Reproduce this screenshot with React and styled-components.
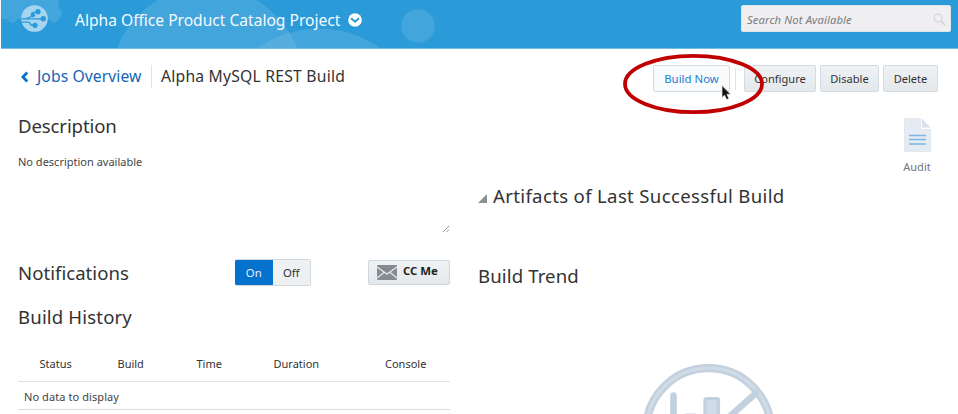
import React from "react";
import styled, { createGlobalStyle, css } from "styled-components";

const Global = createGlobalStyle`
  * { box-sizing: border-box; }
  html, body { margin: 0; height: 414px; overflow: hidden; background: #fff; }
  body { font-family: "Noto Sans", "Open Sans", sans-serif; color: #333; }
  button { font-family: inherit; padding: 0; margin: 0; }
`;

const Page = styled.main`
  position: relative;
  width: 958px;
  height: 414px;
  overflow: hidden;
`;

const Header = styled.header`
  position: relative;
  display: flex;
  height: 49px;
  margin-left: 1px;
  padding: 5px 7px 0 20px;
  background: #2b9ad8;
  border-bottom: 1px solid #74bde7;
`;

const HeaderArt = styled.svg`
  position: absolute;
  inset: 0;
`;

const Logo = styled.svg`
  position: relative;
  flex: none;
  width: 27px;
  height: 27px;
`;

const ProjectTitle = styled.div`
  position: relative;
  display: flex;
  align-items: center;
  gap: 8px;
  height: 29px;
  margin-left: 27px;
  color: #f4faff;
  font-size: 15.6px;
  white-space: nowrap;
`;

const TitleText = styled.span`
  width: 265px;
  letter-spacing: -0.01px;
`;

const Search = styled.div`
  position: relative;
  display: flex;
  align-items: center;
  justify-content: space-between;
  width: 210px;
  height: 27px;
  margin-left: auto;
  padding: 1px 4px 0 5px;
  background: #efeff1;
  border: 1px solid #dbe6ee;
  border-radius: 2px;
  color: #777b80;
  font-size: 11.2px;
  font-style: italic;
  letter-spacing: 0.14px;
`;

const Toolbar = styled.div`
  display: flex;
  align-items: flex-start;
  height: 54px;
  padding: 16px 20px 0 20px;
`;

const Crumbs = styled.nav`
  display: flex;
  align-items: center;
  height: 23px;
  font-size: 15.7px;
  line-height: 23px;
  white-space: nowrap;
`;

const BackLink = styled.a`
  display: flex;
  align-items: center;
  gap: 8px;
  width: 131px;
  color: #1466b3;
  letter-spacing: 0.08px;
`;

const CrumbCurrent = styled.span`
  padding-left: 9px;
  border-left: 1px solid #dfe4ea;
  color: #333;
  letter-spacing: 0.22px;
`;

const Actions = styled.div`
  display: flex;
  align-items: center;
  gap: 4px;
  margin-left: auto;
`;

const Button = styled.button`
  width: ${(p) => p.$width}px;
  height: 27px;
  border: 1px solid #d3dbe2;
  border-radius: 2px;
  background: linear-gradient(#f0f2f4, #e4e8eb);
  color: #333;
  font-size: 11.1px;
  line-height: 25px;
  ${(p) =>
    p.$hover &&
    css`
      background: #f8fafb;
      color: #1c7fd0;
      font-size: 11.4px;
    `}
`;

const Divider = styled.span`
  width: 1px;
  height: 22px;
  margin: 0 4px 0 1px;
  background: #dde5ec;
`;

const Columns = styled.div`
  display: grid;
  grid-template-columns: 432px 460px;
  column-gap: 28px;
  padding-left: 18px;
`;

const Column = styled.section`
  display: flex;
  flex-direction: column;
`;

const Heading = styled.h2`
  margin: 0;
  height: 26px;
  color: #333;
  font-size: 18.6px;
  font-weight: 400;
  line-height: 26px;
  letter-spacing: ${(p) => p.$spacing || 0}px;
  white-space: nowrap;
`;

const DescriptionTitle = styled(Heading)`
  margin-top: 10px;
`;

const Description = styled.div`
  display: flex;
  justify-content: space-between;
  height: 83px;
  margin-top: 11px;
  padding-top: 4px;
  font-size: 11px;
  line-height: 16px;
  color: #444;
`;

const Grip = styled.svg`
  align-self: flex-end;
`;

const NotificationRow = styled.div`
  display: flex;
  align-items: center;
  height: 27px;
  margin-top: 26px;
`;

const NotificationTitle = styled(Heading)`
  width: 217px;
`;

const Switch = styled.div`
  display: flex;
  width: 76px;
  height: 27px;
  border: 1px solid #d0d7dd;
  border-left: 0;
  border-radius: 2px;
  overflow: hidden;
`;

const SwitchOption = styled.button`
  flex: 1;
  border: 0;
  font-size: 11.3px;
  background: ${(p) => (p.$on ? "#0572ce" : "#eef0f1")};
  color: ${(p) => (p.$on ? "#e1f0fc" : "#333")};
`;

const CcButton = styled.button`
  display: flex;
  align-items: center;
  gap: 6px;
  width: 82px;
  height: 25px;
  margin-left: auto;
  padding-left: 8px;
  border: 1px solid #ccd8e0;
  border-radius: 2px;
  background: linear-gradient(#f0f2f4, #e5e8ea);
  color: #222;
  font-size: 11.4px;
  font-weight: 700;
`;

const CcLabel = styled.span`
  margin-top: -4px;
`;

const HistoryTitle = styled(Heading)`
  margin-top: 18px;
`;

const HistoryTable = styled.div`
  margin-top: 17px;
  font-size: 11px;
  color: #333;
`;

const HeadRow = styled.div`
  display: grid;
  grid-template-columns: 78px 79px 77px 111.5px auto;
  height: 35px;
  padding-left: 21.5px;
  border-bottom: 1px solid #dfe2e6;
  line-height: 34px;
`;

const EmptyRow = styled.div`
  height: 28px;
  padding-left: 6px;
  border-bottom: 1px solid #d9dbe5;
  color: #444;
  line-height: 29px;
  letter-spacing: 0.08px;
`;

const Audit = styled.div`
  display: flex;
  flex-direction: column;
  align-items: center;
  align-self: flex-end;
  width: 42px;
  height: 80px;
  padding-top: 15px;
  font-size: 11px;
  line-height: 16px;
  color: #737679;
`;

const AuditIcon = styled.svg`
  flex: none;
  margin-bottom: 7px;
`;

const Artifacts = styled.div`
  display: flex;
  gap: 6px;
`;

const Triangle = styled.svg`
  margin-top: 11px;
`;

const TrendTitle = styled(Heading)`
  margin-top: 54px;
`;

const NoChart = styled.svg`
  flex: none;
  margin: 74px 0 0 164px;
`;

const Overlay = styled.svg`
  position: absolute;
  inset: 0;
  pointer-events: none;
`;

export default function App() {
  return (
    <Page>
      <Global />
      <Header>
        <HeaderArt width="957" height="48" viewBox="1 0 957 48">
          <g fill="#fff" fillOpacity="0.11">
            <path d="M1 19Q7 18 10 22Q15 25 18 18Q29 28 45 17L52 22Q56 24 60 18Q64 13 60 9Q57 5 59 0H1Z" />
            <circle cx="207" cy="83" r="96.6" />
            <circle cx="319" cy="133.5" r="105" />
            <circle cx="418" cy="26" r="16.8" />
          </g>
        </HeaderArt>
        <Logo viewBox="0 0 27 27">
          <circle cx="13.5" cy="13.5" r="13.3" fill="#a4d4f0" />
          <g fill="none" stroke="#2b9ad8" strokeWidth="1.3">
            <path d="M0 13.8H22M4 13.8Q8 13.5 12 10M10 9Q12 6.7 17 6.7M0 17.2H7Q9 17.2 10 20H14" />
          </g>
          <g fill="#2b9ad8">
            <circle cx="17" cy="6.7" r="2.6" />
            <circle cx="12" cy="10" r="2.3" />
            <circle cx="22.3" cy="13.8" r="2.7" />
            <circle cx="14" cy="20.3" r="2.6" />
          </g>
        </Logo>
        <ProjectTitle>
          <TitleText>Alpha Office Product Catalog Project</TitleText>
          <svg width="14" height="14" viewBox="0 0 14 14">
            <circle cx="7" cy="7" r="6.8" fill="#fff" />
            <path d="M3 5.2 7 8.7l4-3.5" fill="none" stroke="#2b9ad8" strokeWidth="2" />
          </svg>
        </ProjectTitle>
        <Search>
          Search Not Available
          <svg width="13" height="13" viewBox="0 0 13 13" fill="none" stroke="#d4d5d8">
            <circle cx="5" cy="5" r="3.8" strokeWidth="1.2" />
            <path d="m8 8 4 4" strokeWidth="1.8" />
          </svg>
        </Search>
      </Header>

      <Toolbar>
        <Crumbs>
          <BackLink>
            <svg width="9" height="12" viewBox="0 0 9 12">
              <path d="M7.2 1.5 2.9 6l4.3 4.5" fill="none" stroke="#0572ce" strokeWidth="2.7" />
            </svg>
            Jobs Overview
          </BackLink>
          <CrumbCurrent>Alpha MySQL REST Build</CrumbCurrent>
        </Crumbs>
        <Actions>
          <Button $width={77} $hover>Build Now</Button>
          <Divider />
          <Button $width={72}>Configure</Button>
          <Button $width={59}>Disable</Button>
          <Button $width={55}>Delete</Button>
        </Actions>
      </Toolbar>

      <Columns>
        <Column>
          <DescriptionTitle $spacing={-0.13}>Description</DescriptionTitle>
          <Description>
            No description available
            <Grip width="8" height="8" viewBox="0 0 8 8" stroke="#8d8d8d" strokeWidth="0.9">
              <path d="M1 7 7 1M4.5 7 7 4.5" />
            </Grip>
          </Description>
          <NotificationRow>
            <NotificationTitle $spacing={0.02}>Notifications</NotificationTitle>
            <Switch>
              <SwitchOption $on>On</SwitchOption>
              <SwitchOption>Off</SwitchOption>
            </Switch>
            <CcButton>
              <svg width="20" height="15" viewBox="0 0 20 15">
                <rect width="20" height="15" rx="1" fill="#858b90" />
                <path d="M0 2 10 9 20 2M0 13 7 7.5M20 13 13 7.5" fill="none" stroke="#e9ecee" strokeWidth="1.1" />
              </svg>
              <CcLabel>CC Me</CcLabel>
            </CcButton>
          </NotificationRow>
          <HistoryTitle $spacing={0.15}>Build History</HistoryTitle>
          <HistoryTable>
            <HeadRow>
              <span>Status</span>
              <span>Build</span>
              <span>Time</span>
              <span>Duration</span>
              <span>Console</span>
            </HeadRow>
            <EmptyRow>No data to display</EmptyRow>
          </HistoryTable>
        </Column>

        <Column>
          <Audit>
            <AuditIcon width="27" height="34" viewBox="0 0 27 34">
              <path d="M1 .5h15.5V11.5H26.5V33.5H.5V1Z" fill="#e5ebf2" stroke="#dce4ec" strokeWidth="0.8" />
              <path d="M18 .5V9.5H26.5Z" fill="#d9e2ea" />
              <path d="M5 17.5H22M5 21.5H22M5 26H22" stroke="#7bb6e0" strokeWidth="1.7" />
            </AuditIcon>
            Audit
          </Audit>
          <Artifacts>
            <Triangle width="9" height="9" viewBox="0 0 9 9">
              <path d="M0 9H9V0Z" fill="#8b9197" />
            </Triangle>
            <Heading $spacing={0.33}>Artifacts of Last Successful Build</Heading>
          </Artifacts>
          <TrendTitle $spacing={0.12}>Build Trend</TrendTitle>
          <NoChart width="134" height="51" viewBox="642 363 134 51">
            <circle cx="708.5" cy="430.6" r="62.4" fill="none" stroke="#c3d0dd" strokeWidth="8.2" />
            <circle cx="708.5" cy="430.6" r="62.4" fill="none" stroke="#cfdbe6" strokeWidth="3.2" />
            <path d="M673.5 395.5V420M756 393 728 418" fill="none" stroke="#c3d0dd" strokeWidth="6.6" strokeLinecap="round" />
            <rect x="705" y="398.5" width="13.5" height="30" rx="1.5" fill="#cfdbe6" stroke="#c3d0dd" strokeWidth="3.2" />
            <path d="M685 413.8h11" stroke="#d5dfe8" />
          </NoChart>
        </Column>
      </Columns>

      <Overlay width="958" height="414" viewBox="0 0 958 414">
        <path
          d="M722 85.5V97.5l2.6-2.3 2 4.4 2.3-1-2-4.4h3.7Z"
          fill="#111"
          stroke="#e8e8e8"
          strokeWidth="0.7"
        />
        <ellipse cx="693.5" cy="84" rx="68.5" ry="28.2" fill="none" stroke="#c00000" strokeWidth="3.8" />
      </Overlay>
    </Page>
  );
}
